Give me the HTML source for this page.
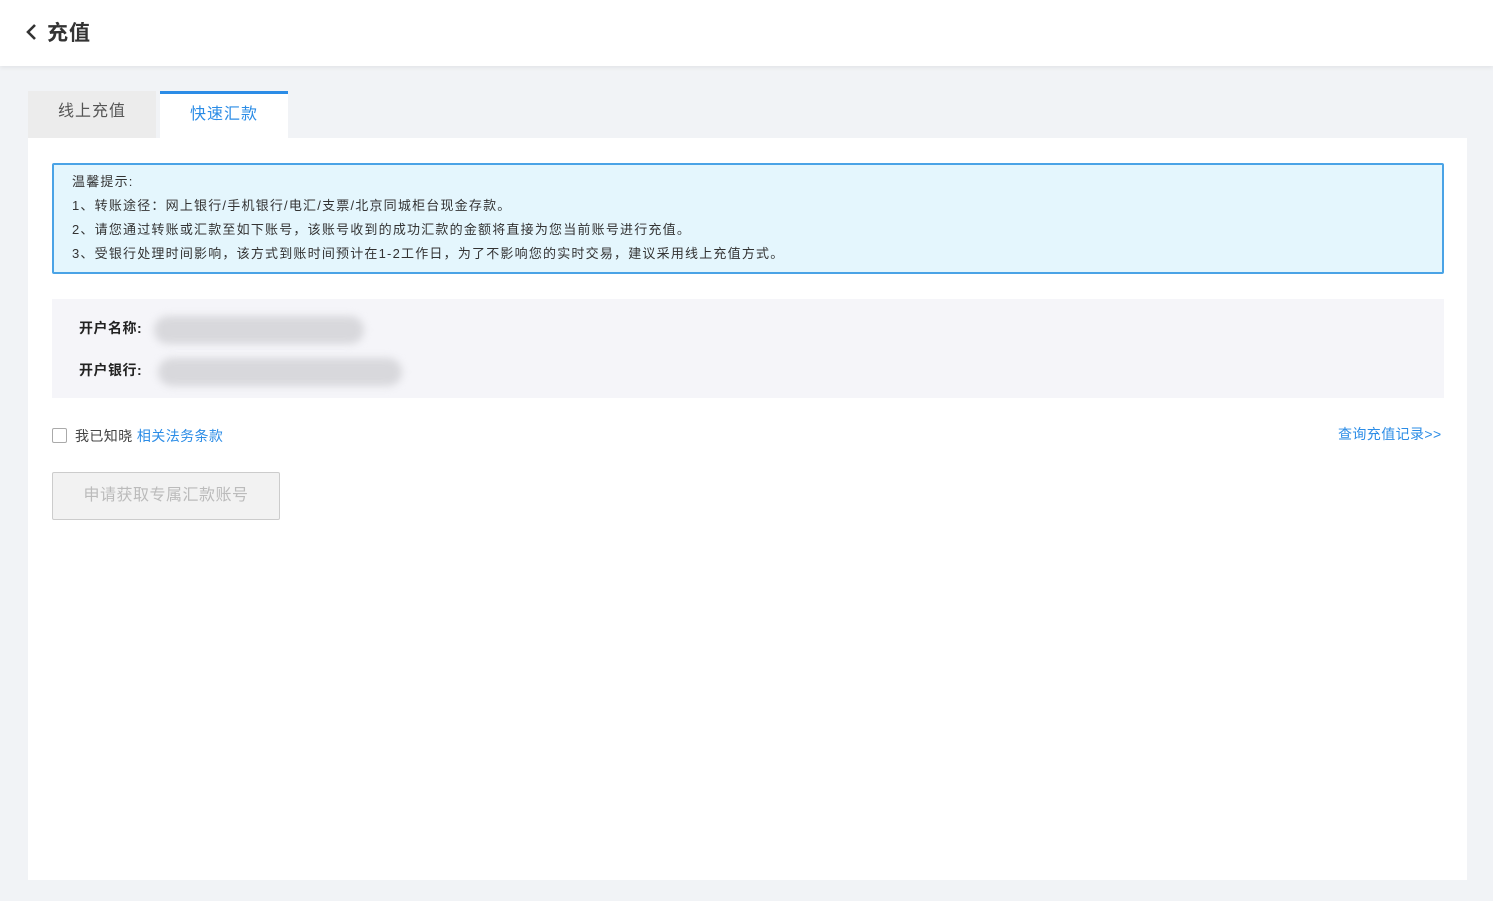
<!DOCTYPE html>
<html><head><meta charset="utf-8"><style>
*{margin:0;padding:0;box-sizing:border-box}
body{width:1493px;height:901px;background:#f1f3f6;font-family:"Liberation Sans","Noto Sans CJK SC",sans-serif;position:relative;overflow:hidden;color:#333}
.hdr{position:absolute;left:0;top:0;width:1493px;height:66px;background:#fff;box-shadow:0 2px 4px rgba(0,0,0,.06)}
.hdr .t{position:absolute;left:47px;top:17px;font-size:21px;font-weight:bold;color:#333;letter-spacing:1px}
.tab{position:absolute;top:91px;height:48px;width:128px;font-size:16px;text-align:center;line-height:42px;letter-spacing:1px}
.card{position:absolute;left:28px;top:138px;width:1439px;height:742px;background:#fff}
.tip{position:absolute;left:52px;top:163px;width:1392px;height:111px;background:#e4f6fd;border:2px solid #4aa3e6;border-radius:2px;font-size:13px;color:#333;padding:5px 0 0 18px;line-height:24px;letter-spacing:1.2px}
.info{position:absolute;left:52px;top:299px;width:1392px;height:99px;background:#f5f5f9}
.lab{position:absolute;left:79px;font-size:14px;font-weight:bold;color:#222;letter-spacing:.5px}
.blur{position:absolute;background:#d8d8dc;border-radius:15px;filter:blur(4px)}
</style></head><body>
<div class="hdr"><svg style="position:absolute;left:25px;top:23px" width="14" height="18" viewBox="0 0 14 18"><path d="M10 2 L3 9 L10 16" fill="none" stroke="#333" stroke-width="2.6"/></svg><div class="t">充值</div></div>
<div class="tab" style="left:28px;background:#ececec;color:#555">线上充值</div>
<div class="tab" style="left:160px;background:#fff;color:#2b8ce6;border-top:3px solid #2b8ce6">快速汇款</div>
<div class="card"></div>
<div class="tip">温馨提示:<br>1、转账途径：网上银行/手机银行/电汇/支票/北京同城柜台现金存款。<br>2、请您通过转账或汇款至如下账号，该账号收到的成功汇款的金额将直接为您当前账号进行充值。<br>3、受银行处理时间影响，该方式到账时间预计在1-2工作日，为了不影响您的实时交易，建议采用线上充值方式。</div>
<div class="info"></div>
<div class="lab" style="top:318px">开户名称:</div>
<div class="lab" style="top:360px">开户银行:</div>
<div class="blur" style="left:154px;top:316px;width:210px;height:28px"></div>
<div class="blur" style="left:158px;top:358px;width:244px;height:28px"></div>
<div style="position:absolute;left:52px;top:428px;width:15px;height:15px;border:1px solid #aaa;border-radius:2px;background:#fff"></div>
<div style="position:absolute;left:75px;top:426px;font-size:14px;color:#444;letter-spacing:.4px">我已知晓 <span style="color:#2b8ce6">相关法务条款</span></div>
<div style="position:absolute;left:1338px;top:424px;font-size:14px;color:#2b8ce6;letter-spacing:.4px">查询充值记录&gt;&gt;</div>
<div style="position:absolute;left:52px;top:472px;width:228px;height:48px;background:#f2f2f2;border:1px solid #ccc;border-radius:2px;color:#bbb;font-size:16px;text-align:center;line-height:46px;letter-spacing:.5px">申请获取专属汇款账号</div>
</body></html>
